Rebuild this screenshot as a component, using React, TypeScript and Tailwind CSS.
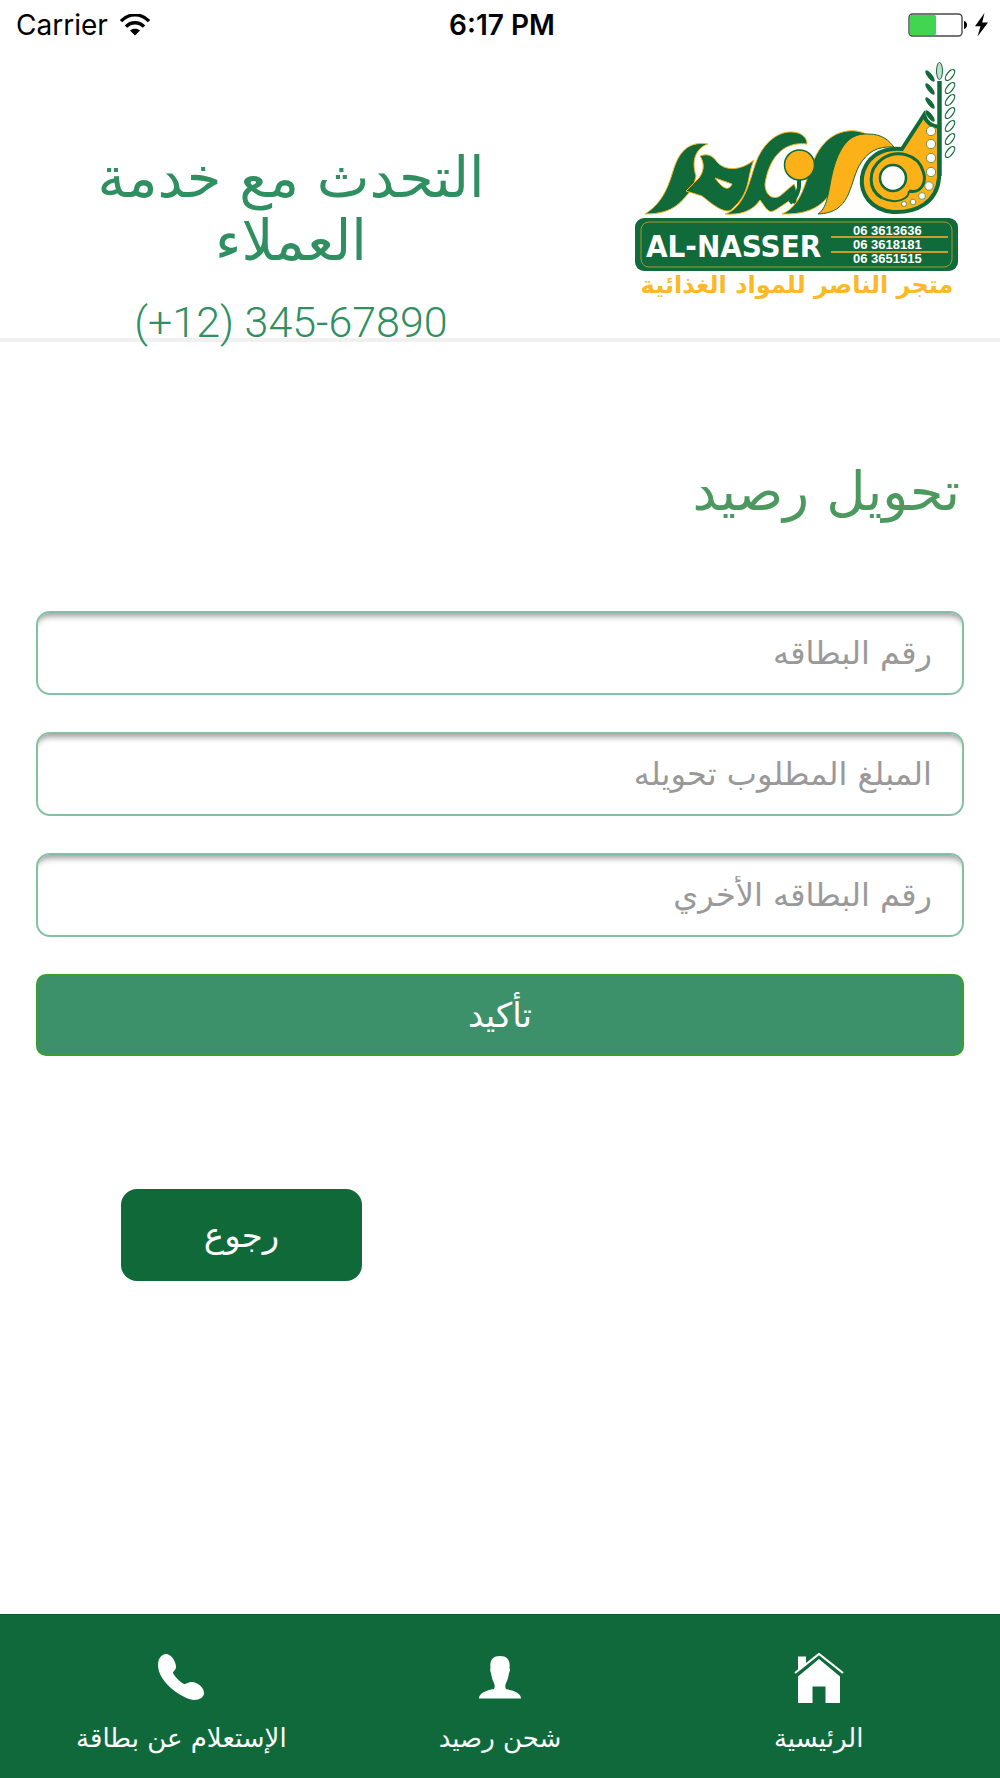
const arabic = "font-['DejaVu_Sans',sans-serif]";

interface Field {
  id: string;
  label: string;
}

const fields: Field[] = [
  { id: "card", label: "رقم البطاقه" },
  { id: "amount", label: "المبلغ المطلوب تحويله" },
  { id: "other-card", label: "رقم البطاقه الأخري" },
];

// white dots along the horn, as [x, y, radius]
const beads = [
  [311, 81, 4.6],
  [311, 94, 4.6],
  [311, 108, 4.6],
  [311, 122, 4.6],
  [309, 136, 4.2],
  [302, 146, 3.4],
  [293, 152, 2.8],
  [284, 154, 2.4],
];

function Wifi() {
  return (
    <svg viewBox="0 0 30 22" className="h-[22px] w-[30px]" aria-hidden="true">
      <path d="M1 7.2C9 -1.2 21 -1.2 29 7.2" fill="none" stroke="#000" strokeWidth="3.4" />
      <path d="M6 12.6C11 7.4 19 7.4 24 12.6" fill="none" stroke="#000" strokeWidth="3.4" />
      <path d="M15 21.5L10 16.6C12.6 14 17.4 14 20 16.6Z" />
    </svg>
  );
}

function Battery() {
  return (
    <svg viewBox="0 0 80 24" className="h-6 w-20" aria-hidden="true">
      <rect x="1" y="1" width="53" height="22" rx="3.5" fill="#fff" stroke="#4a4a4a" strokeWidth="1.4" />
      <rect x="2" y="2" width="26" height="20" rx="1.5" fill="#42d552" />
      <path d="M56 8C60 8.5 60 15.5 56 16Z" />
      <path d="M76.5 0L67 13.2H72.5L69.5 23.5L80 9.6H74.2Z" />
    </svg>
  );
}

function Logo() {
  return (
    <svg viewBox="0 0 350 260" className="h-[260px] w-[350px]" role="img" aria-label="Al-Nasser">
      {/* calligraphy */}
      <g fill="#106a3a" stroke="#f5b322" strokeWidth="1">
        <path d="M25 164C44 152 49 134 54 118C60 100 70 91 88 94C76 98 71 110 76 126L73 138C62 150 56 164 25 164Z" />
        <path d="M79 128C85 120 84 112 80 106C88 103 93 106 97 112C106 122 122 120 134 110C126 128 132 142 111 160C104 164 92 154 82 146L66 141Z" />
        <path d="M105 164C124 158 129 133 135 115C143 91 161 78 178 83C184 85 187 89 187 94C163 91 149 108 145 134C145 143 151 151 160 146L174 134C178 142 177 150 176 155L169 151L157 159C151 163 149 162 145 157L140 150C132 162 119 165 105 164Z" />
        <path d="M162 164C188 153 185 117 202 96C215 79 238 76 252 88C232 86 225 104 219 123C211 150 197 165 162 164Z" />
      </g>
      <path d="M95 128L112 134Q107 145 95 128Z" fill="#fff" stroke="#f5b322" />
      <path d="M179 130C180 140 176 148 170 153" fill="none" stroke="#106a3a" strokeWidth="4" />
      <circle cx="179.5" cy="115" r="15" fill="#fbb117" stroke="#106a3a" strokeWidth="1.5" />
      <path
        d="M198 164C209 157 208 138 214 117C221 94 231 83 248 84C263 84 269 91 274 97C257 96 247 102 239 116C229 135 231 163 198 164Z"
        fill="#fbb117"
        stroke="#106a3a"
      />
      {/* horn */}
      <path
        d="M304 65C306 72 311 76 319 77V128C317 152 297 163 273 162C251 160 240 144 242 127C245 108 261 97 282 99Z"
        fill="#fbb117"
        stroke="#106a3a"
        strokeWidth="4"
      />
      <path
        d="M289 141C302 144 307 131 303 121C298 104 277 99 262 109C247 120 248 140 262 148"
        fill="none"
        stroke="#106a3a"
        strokeWidth="3"
      />
      <path
        d="M262 148C276 155 289 149 289 141"
        fill="none"
        stroke="#106a3a"
        strokeWidth="2"
      />
      <circle cx="273" cy="128" r="13" fill="#fff" stroke="#106a3a" strokeWidth="2.5" />
      {beads.map(([x, y, r]) => (
        <circle key={y} cx={x} cy={y} r={r} fill="#fff" stroke="#106a3a" strokeWidth="0.6" />
      ))}
      {/* wheat */}
      <path d="M319.500 31V126" stroke="#106a3a" strokeWidth="4.500" />
      <ellipse cx="319.500" cy="21" rx="3" ry="8.500" fill="#c3dccd" stroke="#106a3a" />
      {[26, 39, 53, 66].map((y) => (
        <ellipse
          key={y}
          cx="310"
          cy={y}
          rx="2.4"
          ry="7"
          fill="#106a3a"
          transform={`rotate(-38 310 ${y})`}
        />
      ))}
      {[25, 38, 50, 63, 76, 89, 102].map((y) => (
        <ellipse
          key={y}
          cx="330"
          cy={y}
          rx="3"
          ry="6.500"
          fill="#fff"
          stroke="#106a3a"
          strokeWidth="1.3"
          transform={`rotate(38 330 ${y})`}
        />
      ))}
      {/* name plate */}
      <rect x="15" y="168" width="323" height="53" rx="9" fill="#106a3a" />
      <rect x="21" y="172" width="311" height="45" rx="8" fill="none" stroke="#a59a2c" />
      <path d="M211 187H328M211 202H328" stroke="#c79f24" strokeWidth="2" />
      <g fill="#fff" className="font-['DejaVu_Sans_Condensed','DejaVu_Sans',sans-serif] font-bold">
        <text x="26" y="207" fontSize="31">
          AL-NASSER
        </text>
        <g className="font-['Liberation_Sans',sans-serif]" fontSize="13">
          <text x="233" y="185">06 3613636</text>
          <text x="233" y="199">06 3618181</text>
          <text x="233" y="213">06 3651515</text>
        </g>
      </g>
      <text
        x="177"
        y="243"
        fontSize="24"
        textAnchor="middle"
        fill="#fbb829"
        direction="rtl"
        className="font-['DejaVu_Sans',sans-serif] font-bold"
      >
        متجر الناصر للمواد الغذائية
      </text>
    </svg>
  );
}

function PhoneIcon() {
  return (
    <svg viewBox="0 0 50 50" className="size-[50px]" aria-hidden="true">
      <path
        d="M2 12C2 5 6 1 10 1C15 1 20 8 20 14C20 17 17 18 17 20C18 23 25 30 28 31C31 31 32 29 36 29C41 29 48 34 48 40C48 44 44 47 38 47C30 47 2 31 2 12Z"
        fill="#fff"
      />
    </svg>
  );
}

function UserIcon() {
  return (
    <svg viewBox="0 0 50 50" className="size-[50px]" aria-hidden="true">
      <path
        d="M4 45.500C4 40 11 37.500 19 36C20 34 20 32 18.500 29C17 26 16.500 23 16 20C15 18 15 16 15.500 15C14.500 7 18 3 25 3C32 3 35.500 7 34.500 15C35.500 16 35 18 34 20C33.500 23 33 26 31.500 29C30 32 30 34 31 36C39 37.500 46 40 46 45.500Z"
        fill="#fff"
      />
    </svg>
  );
}

function HomeIcon() {
  return (
    <svg viewBox="0 0 50 50" className="size-[50px]" aria-hidden="true">
      <path d="M4 50V23.500L25 6L46 23.500V50H31.500V33.500H18.500V50Z" fill="#fff" />
      <path d="M4 18V3.500H12V11Z" fill="#fff" />
      <path d="M1 20L25 1L49 20" fill="none" stroke="#fff" strokeWidth="2.200" />
    </svg>
  );
}

const links = [
  { name: "الرئيسية", icon: <HomeIcon /> },
  { name: "شحن رصيد", icon: <UserIcon /> },
  { name: "الإستعلام عن بطاقة", icon: <PhoneIcon /> },
];

function App() {
  return (
    <div className={`flex min-h-screen flex-col bg-white ${arabic}`}>
      {/* status bar */}
      <div className="grid h-[50px] grid-cols-3 items-center pr-3 pl-4 font-['Inter',sans-serif] text-[28px] text-black">
        <div className="flex items-center gap-3">
          <span>Carrier</span>
          <Wifi />
        </div>
        <div className="text-center font-semibold">6:17 PM</div>
        <div className="flex justify-end">
          <Battery />
        </div>
      </div>

      <header className="flex border-b-4 border-[#f0f0f0] pr-[30px]">
        <div className="mr-[38px] flex-1 px-16 pt-24 text-center text-[#2f8f61]">
          <p dir="rtl" className="text-[56px] leading-[63px]">
            التحدث مع خدمة العملاء
          </p>
          <p className="mt-[34px] font-['Roboto',sans-serif] text-[43px] leading-8 font-light">
            (+12) 345-67890
          </p>
        </div>
        <Logo />
      </header>

      <main dir="rtl" className="px-9 pb-20">
        <h1 className="mt-[114px] px-1 text-[54px] leading-[72px] text-[#4b995f]">تحويل رصيد</h1>
        <form className="mt-[83px] flex flex-col gap-[37px]" onSubmit={(e) => e.preventDefault()}>
          {fields.map((item) => (
            <input
              key={item.id}
              id={item.id}
              type="text"
              placeholder={item.label}
              aria-label={item.label}
              className="h-[84px] w-full rounded-[14px] border-2 border-[#85c0a5] px-[30px] text-[32px] shadow-[inset_0_9px_6px_-6px_rgba(0,0,0,0.4)] placeholder:text-[#999]"
            />
          ))}
          <button
            type="submit"
            className="h-[82px] rounded-[10px] border-2 border-[#38a02c] bg-[#3c916a] text-[34px] text-white"
          >
            تأكيد
          </button>
        </form>
        <div className="mt-[133px] flex justify-end pl-[85px]">
          <button
            type="button"
            className="h-[92px] w-[241px] rounded-2xl bg-[#0f6938] text-[34px] text-white"
          >
            رجوع
          </button>
        </div>
      </main>

      <footer className="mt-auto border-t border-[#0a5a2e] bg-[#10693a]">
        <nav dir="rtl" className="grid h-[163px] grid-cols-3 px-[22px] pt-[38px] text-white">
          {links.map((item) => (
            <a key={item.name} href="#" className="flex flex-col items-center gap-3">
              {item.icon}
              <span className="text-[26px] leading-[46px] whitespace-nowrap">{item.name}</span>
            </a>
          ))}
        </nav>
      </footer>
    </div>
  );
}

export default App;
